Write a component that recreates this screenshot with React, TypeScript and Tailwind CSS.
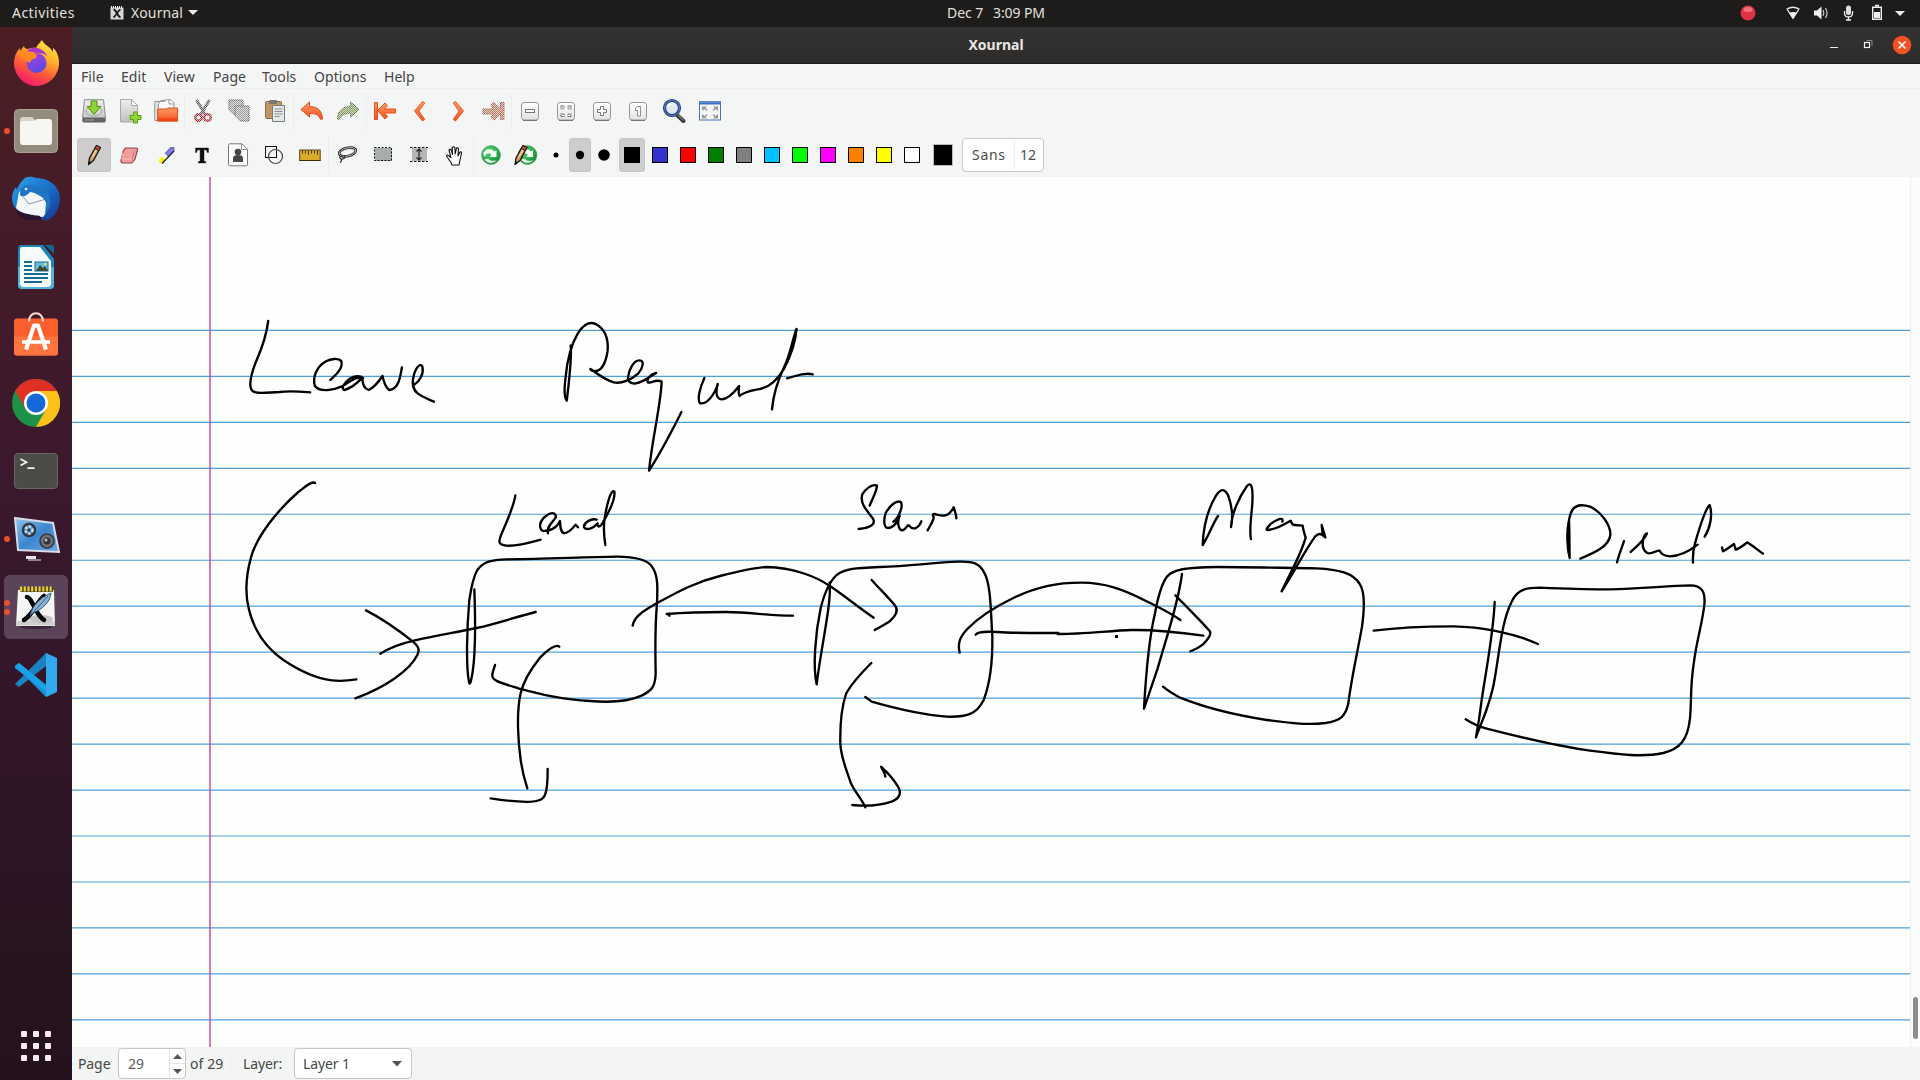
import React from "react";

type Kids = { children?: React.ReactNode };

/* ---------- shared primitives ---------- */

const Cell = ({ children, w = "w-9" }: Kids & { w?: string }) => (
  <div className={`flex h-11 shrink-0 items-center justify-center ${w}`}>{children}</div>
);

const Icon = ({ children }: Kids) => (
  <svg width="24" height="24" viewBox="0 0 24 24" fill="none" className="overflow-visible">
    {children}
  </svg>
);

const Sep = () => <div className="h-9 w-px shrink-0 bg-[#eceded]" />;

const Defs = () => (
  <svg width="0" height="0" className="absolute">
    <defs>
      <pattern id="checker" width="2" height="2" patternUnits="userSpaceOnUse">
        <rect width="1" height="1" fill="#fff" />
        <rect x="1" y="1" width="1" height="1" fill="#fff" />
        <rect x="1" width="1" height="1" fill="#444" />
        <rect y="1" width="1" height="1" fill="#444" />
      </pattern>
      <mask id="dither" maskUnits="userSpaceOnUse" x="-2" y="-2" width="28" height="28">
        <rect x="-2" y="-2" width="28" height="28" fill="url(#checker)" />
      </mask>
      <linearGradient id="orange" x1="0" y1="0" x2="0" y2="1">
        <stop offset="0" stopColor="#ff9a63" />
        <stop offset="1" stopColor="#f0521f" />
      </linearGradient>
      <linearGradient id="button" x1="0" y1="0" x2="0" y2="1">
        <stop offset="0" stopColor="#ffffff" />
        <stop offset="1" stopColor="#e2e2e2" />
      </linearGradient>
      <linearGradient id="grey" x1="0" y1="0" x2="0" y2="1">
        <stop offset="0" stopColor="#eeeeee" />
        <stop offset="1" stopColor="#c0c1bf" />
      </linearGradient>
      <radialGradient id="green" cx=".35" cy=".3" r=".8">
        <stop offset="0" stopColor="#5fd67c" />
        <stop offset="1" stopColor="#0b8a2c" />
      </radialGradient>
      <linearGradient id="foxBody" x1=".8" y1="0" x2=".3" y2="1">
        <stop offset="0" stopColor="#fff04a" />
        <stop offset=".35" stopColor="#ffb02a" />
        <stop offset=".65" stopColor="#ff5a36" />
        <stop offset="1" stopColor="#f01673" />
      </linearGradient>
      <linearGradient id="foxGlobe" x1="0" y1="0" x2=".5" y2="1">
        <stop offset="0" stopColor="#b03ee0" />
        <stop offset="1" stopColor="#5a4be0" />
      </linearGradient>
      <linearGradient id="bird" x1="0" y1="0" x2="1" y2="1">
        <stop offset="0" stopColor="#2ba4ea" />
        <stop offset=".5" stopColor="#1a6fc8" />
        <stop offset="1" stopColor="#16358f" />
      </linearGradient>
      <linearGradient id="screen" x1="0" y1="0" x2="1" y2="1">
        <stop offset="0" stopColor="#8fc5ec" />
        <stop offset=".5" stopColor="#3c86cf" />
        <stop offset="1" stopColor="#6fa8e4" />
      </linearGradient>
    </defs>
  </svg>
);

/* ---------- toolbar drawings ---------- */

const SaveIcon = () => (
  <Icon>
    <path d="M2.5.7h19L23.4 18v4.2q0 1-1 1H1.6q-1 0-1-1V18z" fill="url(#grey)" stroke="#8c8d8a" />
    <path d="M1 18.5h22v3.7q0 .7-.7.7H1.8q-.8 0-.8-.7z" fill="#62645f" />
    <ellipse cx="12" cy="12" rx="8" ry="5" stroke="#a5a6a3" />
    <path d="M9 2h6v5.5h3.8L12 15.3 5.2 7.5H9z" fill="#8fd336" stroke="#4f8f12" />
    <path d="M3 21h9" stroke="#9fa19c" />
  </Icon>
);
const NewIcon = () => (
  <Icon>
    <g transform="translate(1)">
      <path d="M1.500.5h11l6 6v16.500h-17z" fill="url(#grey)" stroke="#a9aaa8" />
      <path d="M12.500.5v6h6z" fill="#fff" stroke="#a9aaa8" />
      <path d="M14.500 13h4v3.500h3.500v4h-3.500V24h-4v-3.500H11v-4h3.500z" fill="#8ed433" stroke="#5a9c16" />
    </g>
  </Icon>
);
const OpenIcon = () => (
  <Icon>
    <path d="M.7 2.500h6v-1h4v20H.7z" fill="#dfe0de" stroke="#999" />
    <path d="M6.500 2.500H11V.7h6l3 3v10H4.500v-9z" fill="#fafafa" stroke="#9a9a9a" />
    <path d="M15 1v4h4.500" stroke="#9a9a9a" />
    <path d="M3.700 10H13l1-1h9.600v13.200H3.700z" fill="url(#orange)" stroke="#d9531c" />
    <path d="M4 20.500h19.500" stroke="#f0400e" strokeWidth="2" />
  </Icon>
);
const CutIcon = () => (
  <Icon>
    <g mask="url(#dither)">
      <path d="M5.500 1 14 15M18.500 1 10 15" stroke="#555" strokeWidth="3" />
      <circle cx="7.500" cy="18.500" r="3.300" stroke="#9e1f2a" strokeWidth="2.400" />
      <circle cx="16.500" cy="18.500" r="3.300" stroke="#9e1f2a" strokeWidth="2.400" />
    </g>
  </Icon>
);
const CopyIcon = () => (
  <Icon>
    <g mask="url(#dither)">
      <path d="M2 1h14v15H7l-5-5z" fill="#9c9d9c" stroke="#555" />
      <path d="M8 7h14v15H13l-5-5z" fill="#9c9d9c" stroke="#555" />
    </g>
  </Icon>
);
const PasteIcon = () => (
  <Icon>
    <rect x="2.500" y="2.500" width="16" height="17" rx="1" fill="#c09566" stroke="#8f6a43" />
    <rect x="6" y="1" width="8" height="4" rx="1" fill="#777" />
    <path d="M9.500 6.500h12v16h-12z" fill="#e6e7e8" stroke="#777c80" />
    <path d="M11.500 10h8M11.500 12.500h8M11.500 15h8M11.500 17.500h5" stroke="#8c8f92" />
  </Icon>
);
const UndoIcon = () => (
  <Icon>
    <path d="M1 10.500 9.500 3v4.500c7 .2 12.500 3 13 12.500l-2 .3c-2-4.500-5-6-11-5.800V18z" fill="url(#orange)" stroke="#dc4e1a" strokeLinejoin="round" />
  </Icon>
);
const RedoIcon = () => (
  <Icon>
    <g mask="url(#dither)">
      <path d="M23 10.500 14.500 3v4.500c-7 .2-12.500 3-13 12.500l2 .3c2-4.500 5-6 11-5.800V18z" fill="#7f9a5a" stroke="#4a672f" strokeLinejoin="round" />
    </g>
  </Icon>
);
const FirstIcon = () => (
  <Icon>
    <path d="M1.500 3.500h3v17h-3zM4.500 11.500l7.500-7.500 2.500 2.500-3 3.500h11v4h-11l3 3.500-2.500 2.500z" fill="url(#orange)" stroke="#e2521d" strokeLinejoin="round" />
  </Icon>
);
const PrevIcon = () => (
  <Icon>
    <path d="M13.500 2.500 15.800 4 10 12l5.800 8.500-2.300 1.500L5.500 12z" fill="url(#orange)" stroke="#ea5c27" strokeLinejoin="round" />
  </Icon>
);
const NextIcon = () => (
  <Icon>
    <path d="M10.500 2.500 8.200 4 14 12l-5.800 8.500 2.300 1.500 8-10z" fill="url(#orange)" stroke="#ea5c27" strokeLinejoin="round" />
  </Icon>
);
const LastIcon = () => (
  <Icon>
    <g mask="url(#dither)" transform="translate(1)">
      <path d="M1 10h10.500L9 6l3-2.500 6.500 6V3.500H22v17h-3.500v-5.500L12 21l-3-2.500 2.500-3.500H1z" fill="#b9785d" stroke="#995341" />
    </g>
  </Icon>
);
const ZoomButton = ({ children }: Kids) => (
  <Icon>
    <rect x="3.500" y="3.500" width="17" height="17.500" rx="2.500" fill="url(#button)" stroke="#969896" />
    <path d="M5 21.500h14" stroke="#777" />
    <g stroke="#757775" fill="#fff">{children}</g>
  </Icon>
);
const MagnifierIcon = () => (
  <Icon>
    <path d="m15 16 6.500 6" stroke="#333" strokeWidth="4" strokeLinecap="round" />
    <path d="m15 15 6 6" stroke="#777" strokeWidth="1.500" strokeLinecap="round" />
    <circle cx="10" cy="9" r="7.500" fill="#dfe9f5" stroke="#24417f" strokeWidth="3.200" />
    <circle cx="10" cy="9" r="7.500" stroke="#5578bd" strokeWidth="1.200" />
    <path d="M5.500 8.500c.5-3 3-4.500 6-4" stroke="#fff" strokeWidth="1.500" />
  </Icon>
);
const FullscreenIcon = () => (
  <Icon>
    <rect x="1.500" y="2.500" width="21" height="18.500" fill="#f5f6f7" stroke="#4a74b5" />
    <path d="M1 2h22v3.500H1z" fill="#3f6fc0" />
    <path d="M1.500 3h21" stroke="#7da3de" />
    <path d="M4 7.500h5L7.500 9l2 2-1 1-2-2L4 12zM20 7.500h-5L16.500 9l-2 2 1 1 2-2L20 12zM4 19.500h5L7.500 18l2-2-1-1-2 2L4 15zM20 19.500h-5l1.500-1.500-2-2 1-1 2 2 2.500-2z" fill="#999b99" />
  </Icon>
);

const PencilShape = () => (
  <>
    <path d="M6.500 21.500 7.500 15 14.500 2.500l4 2L11.500 17.500z" fill="#d9a066" stroke="#111" strokeWidth="1.300" strokeLinejoin="round" />
    <path d="m10.500 13.500 4.500-8" stroke="#f6d9a8" strokeWidth="1.300" />
    <path d="m14.500 2.500 4 2-1.700 3-4-2z" fill="#c44434" stroke="#222" />
    <path d="m6.500 21.500.6-3.500 2.500 1.200z" fill="#111" />
  </>
);
const EraserIcon = () => (
  <Icon>
    <path d="M7.500 5h10.500q2 0 1.500 2l-2.500 9-3 4H5.500q-3 0-2.500-3L5 9q.7-2.500 2.500-4z" fill="#f29c9c" stroke="#8f4549" strokeWidth="1.200" />
    <path d="M5 9.500 3.500 16h10l3-9.500" stroke="#f9c0be" />
    <path d="m14 16.500 2.500-9.500" stroke="#c06f70" />
  </Icon>
);
const HighlighterIcon = () => (
  <Icon>
    <path d="M16.500 4.500h3.500v3.500l-6 6-3-3.500z" fill="#817bea" stroke="#55529a" strokeWidth=".8" />
    <path d="m11 10.500 3 3.500-2.500 2.500-3.500-3z" fill="#fff" />
    <path d="m8 13.500 3.500 3-4 3.500H5v-3.500z" fill="#f7ef14" />
    <path d="M20 8 8 20.500" stroke="#222" strokeWidth="1.300" />
  </Icon>
);
const TextIcon = () => (
  <Icon>
    <path d="M5.500 5h13v4.500h-1.200c-.3-2-1-2.700-2.500-2.700H14v10.400c0 1 .5 1.300 1.800 1.400V20H8.300v-1.400c1.300-.1 1.800-.4 1.800-1.400V6.800h-.9c-1.500 0-2.200.7-2.500 2.700H5.500z" fill="#111" stroke="#111" strokeWidth=".4" />
  </Icon>
);
const ImageIcon = () => (
  <Icon>
    <path d="M4 .8h12l5.500 5.500v15.500q0 1-1 1H4q-1.500 0-1.500-1.500V2.300Q2.500.8 4 .8z" fill="#fff" stroke="#777" />
    <path d="M15.500 1v5.500h6" stroke="#999" />
    <circle cx="12" cy="9" r="3.300" fill="#444746" />
    <path d="M7 19v-4q0-3 5-3t5 3v4z" fill="#444746" />
  </Icon>
);
const ShapesIcon = () => (
  <Icon>
    <rect x="3.500" y="3.500" width="11" height="11" stroke="#111" />
    <circle cx="13.500" cy="13.500" r="7" stroke="#444" strokeWidth="1.200" />
  </Icon>
);
const RulerIcon = () => (
  <Icon>
    <rect x="1.700" y="7" width="20.500" height="10.500" fill="#d7aa2a" stroke="#5c450c" />
    <path d="M1.500 17.500h21" stroke="#3d2d05" />
    <path d="M4.500 7.500v3M7.500 7.500v3M10.500 7.500v4M13.500 7.500v3M16.500 7.500v3M19.500 7.500v4" stroke="#48350a" />
  </Icon>
);
const LassoIcon = () => (
  <Icon>
    <ellipse cx="12.500" cy="9" rx="8.500" ry="4" transform="rotate(-13 12.500 9)" stroke="#222" strokeWidth="2.600" />
    <ellipse cx="12.500" cy="9" rx="8.500" ry="4" transform="rotate(-13 12.500 9)" stroke="#ddd" strokeWidth=".8" />
    <path d="M8 13c-5 0-3 3-1.500 3.500M9.500 12.500c1.500 4-2.500 3-3 4s.5 2-1.500 3" stroke="#333" strokeWidth="1.300" />
  </Icon>
);
const SelectRectIcon = () => (
  <Icon>
    <rect x="4" y="5" width="17" height="13" fill="#a8acab" />
    <rect x="3.500" y="4.500" width="17" height="13" stroke="#111" strokeDasharray="2 1.500" />
  </Icon>
);
const VerticalSpaceIcon = () => (
  <Icon>
    <rect x="5" y="5" width="15" height="13" fill="#b5b7b6" />
    <path d="M3 4.500h18M3 18.500h18" stroke="#111" strokeDasharray="2.500 1.500" />
    <path d="M12 6v11M9.500 8.500 12 6l2.500 2.500M9.500 14.500 12 17l2.500-2.500" stroke="#222" strokeWidth="1.200" />
  </Icon>
);
const HandIcon = () => (
  <Icon>
    <path d="M8 19.500 3.500 13q1-2 3.500.8l1 .8-2-7.600q1.500-1.500 2.500.5l1 4-.3-7q1.500-1.500 2.600 0l.4 6.500 1.300-6q1.800-.6 2 1L15 13l2-4q1.500-.6 1.500 1L17 17l-1 5H9z" fill="#fff" stroke="#111" strokeWidth="1.100" strokeLinejoin="round" />
  </Icon>
);
const SwirlShape = () => (
  <>
    <circle cx="12" cy="12" r="9.300" fill="url(#green)" stroke="#2c9a47" strokeWidth=".8" />
    <path d="M4 11c1.500-5 8-6.500 11.500-2.500l2-1.500v7h-7l2-2c-2-2.500-5.500-2.500-6.500 2z" fill="#f3fbf4" />
    <path d="M5.500 16.500c3 4.500 9 4.500 12.500.5-3.500 1.500-7 1-9-1.500z" fill="#e0f5e4" />
  </>
);

const Dot = ({ r }: { r: number }) => (
  <svg width="16" height="16" viewBox="0 0 16 16" className="shrink-0">
    <circle cx="8" cy="8" r={r} fill="#000" />
  </svg>
);

const swatches = [
  "bg-[#3333cc]", "bg-[#ff0000]", "bg-[#008000]", "bg-[#808080]", "bg-[#00c0ff]",
  "bg-[#00ff00]", "bg-[#ff00ff]", "bg-[#ff8000]", "bg-[#ffff00]", "bg-white",
];

/* ---------- dock drawings ---------- */

const DockSvg = ({ children }: Kids) => (
  <svg width="48" height="48" viewBox="0 0 48 48" fill="none">{children}</svg>
);

const Firefox = () => (
  <DockSvg>
    <path d="M30 1c-2 3-5 5-6 8-5-1-8 1-8 1-3 0-4-2-4-3-2 2-3 4-3 5-1-1-1-2-1-3-4 4-6 9-6 15 0 12 10 23 22 23s23-10 23-23c0-6-2-12-6-15 0 2 0 3 0 4-3-6-9-7-11-12z" fill="url(#foxBody)" />
    <circle cx="24.500" cy="24" r="10" fill="url(#foxGlobe)" />
    <path d="M9 12c4-2 9 0 12 2 3 1 5 1 3 5-4 1-5 2-6 5-3-1-6-5-10-7z" fill="#ff8a1c" />
    <path d="M15 12c5-6 17-3 20 5-4-3-7-3-10-3z" fill="#a937c8" />
  </DockSvg>
);
const Files = () => (
  <DockSvg>
    <rect x="2.500" y="2.500" width="43" height="43" rx="4" fill="#938b7c" stroke="#aca594" />
    <path d="M8 13q0-3 3-3h8q2 0 3 2l2 2H8z" fill="#d9d4c9" />
    <path d="M8 15q0-1 2-1h10q3 0 5-2h12q3 0 3 3v20q0 3-3 3H11q-3 0-3-3z" fill="#f8f6f1" />
  </DockSvg>
);
const Thunderbird = () => (
  <DockSvg>
    <path d="M10 6c4-6 11-4 14-3 14 0 24 9 24 21 0 11-7 20-15 22l1-3-5 3 1-5-9 1C8 40 0 33 0 24c0-6 2-9 4-12l1 3c1-4 3-7 5-9z" fill="url(#bird)" />
    <path d="m7 17 8-3 19 10v14l-3 4C20 42 9 39 4 33z" fill="#f4f6f9" />
    <path d="m8 18 9 11 17-5" stroke="#8e98a6" />
    <path d="M8 20c0-8 6-12 12-9 12-1 20 6 18 20l-5 9 1-12c-2-6-8-10-16-11-4 5-8 5-10 3z" fill="#2074c4" />
    <path d="M3 34c8 5 18 6 25 7l2 5-10-1C10 45 5 40 3 34z" fill="#2a1430" />
    <circle cx="14" cy="14" r="1.300" fill="#eee" />
  </DockSvg>
);
const Writer = () => (
  <DockSvg>
    <path d="M9 2h22l11 14v26q0 4-4 4H10q-4 0-4-4V6q0-4 3-4z" fill="#1a87b7" />
    <path d="M33 2h7q2 0 2 2v7z" fill="#0c6a92" />
    <path d="M10 4h18l11 14v23q0 3-3 3H11q-3 0-3-3V7q0-3 2-3z" fill="#f7fafb" />
    <path d="M6 24h2v18q0 2 3 2h25q3 0 3-2V24h3v18q0 4-4 4H10q-4 0-4-4z" fill="#51b5d9" />
    <path d="M12 19h8M12 23h8M12 27h8M12 31h24M12 35h24M12 39h18" stroke="#126d93" strokeWidth="2" />
    <rect x="23" y="19" width="13" height="9" fill="#68bde0" stroke="#126d93" />
    <path d="m24 28 4-6 3 3 2-2 3 5z" fill="#3c4a32" />
    <circle cx="33.500" cy="21" r="1.300" fill="#f5dd6e" />
  </DockSvg>
);
const Software = () => (
  <DockSvg>
    <g transform="translate(0 -1.500)">
      <rect x="2" y="9" width="44" height="37" rx="3" fill="#fa5e2d" />
      <path d="M2 27h44v16q0 3-3 3H5q-3 0-3-3z" fill="#ff733f" />
      <path d="M17 12c0-11 14-11 14 0" stroke="#fbdccd" strokeWidth="2" />
      <path d="m14 40 8-24h4l8 24" stroke="#fff" strokeWidth="4" strokeLinejoin="round" />
      <path d="M10 32.500h28" stroke="#fff" strokeWidth="3.500" />
    </g>
  </DockSvg>
);
const Chrome = () => (
  <DockSvg>
    <circle cx="24" cy="24" r="24" fill="#1e9348" />
    <path d="M3.200 12A24 24 0 0 1 44.800 12H24L13.600 30z" fill="#df3026" />
    <path d="M44.800 12A24 24 0 0 1 24 48l10.400-18L24 12z" fill="#fcc018" />
    <circle cx="24" cy="24" r="12" fill="#fff" />
    <circle cx="24" cy="24" r="9.500" fill="#1668d8" />
  </DockSvg>
);
const Terminal = () => (
  <DockSvg>
    <rect x="2.500" y="6.500" width="43" height="35" rx="3.500" fill="#4c4b48" stroke="#676662" />
    <path d="m8.500 12 6 3.200-6 3.200M15.500 21.200h7" stroke="#f3f3f1" strokeWidth="1.700" />
  </DockSvg>
);
const Recorder = () => (
  <DockSvg>
    <path d="m3 3 38 5 6 29-41-2z" fill="url(#screen)" stroke="#d9dce4" strokeWidth="2" />
    <circle cx="17" cy="15" r="6" stroke="#34383e" strokeWidth="2.500" />
    <circle cx="17" cy="15" r="3.500" stroke="#d9e2ea" strokeWidth="2.500" strokeDasharray="2 2" />
    <circle cx="17" cy="15" r="1.500" fill="#333" />
    <circle cx="35" cy="26" r="7" fill="#6d7278" stroke="#34383e" strokeWidth="1.500" />
    <circle cx="35" cy="26" r="3.500" fill="#30343a" />
    <circle cx="34" cy="25" r="1.500" fill="#bcc3cb" />
    <path d="M14 41h10v3H14z" fill="#e4e4e6" />
    <path d="M16 45h13" stroke="#aaa" strokeWidth="1.500" />
  </DockSvg>
);
const XournalApp = () => (
  <DockSvg>
    <ellipse cx="24" cy="44" rx="16" ry="2" fill="#241226" opacity=".6" />
    <path d="M6 7h36l1 36H4z" fill="#f5f5f4" />
    <path d="M4 38h39v4.500H4z" fill="#cfcfcd" />
    <ellipse cx="29" cy="36" rx="12" ry="4" fill="#c4c4c4" />
    <path d="M8 6.500h33" stroke="#4b4013" strokeWidth="5" />
    <path d="M8 6h33" stroke="#e7cf3d" strokeWidth="5" strokeDasharray="2.200 1.500" />
    <path d="M15 14c5 0 8 18 17 23M32 13C25 18 22 31 12 37" stroke="#080808" strokeWidth="4.500" strokeLinecap="round" />
    <path d="M18 32c3-9 8-16 21-22-1 9-8 16-18 20z" fill="#8bb4d4" stroke="#31597b" />
    <path d="M18 33 36 13" stroke="#31597b" />
  </DockSvg>
);
const VsCode = () => (
  <DockSvg>
    <path d="m3 15 4-3 27 22v12z" fill="#168fd8" />
    <path d="m3 33 4 3 27-21V2z" fill="#1b83c4" />
    <path d="M34 2 45 7v34l-11 5V2z" fill="#32a9ee" />
    <path d="m3 15 4-3 27 22v7L3 17z" fill="#1aa0e8" />
  </DockSvg>
);

const dock = [
  { Art: Firefox, dots: 0, on: false }, { Art: Files, dots: 1, on: false },
  { Art: Thunderbird, dots: 0, on: false }, { Art: Writer, dots: 0, on: false },
  { Art: Software, dots: 0, on: false }, { Art: Chrome, dots: 0, on: false },
  { Art: Terminal, dots: 0, on: false }, { Art: Recorder, dots: 1, on: false },
  { Art: XournalApp, dots: 2, on: true }, { Art: VsCode, dots: 0, on: false },
];

const Dock = () => (
  <aside className="flex w-[72px] shrink-0 flex-col justify-between bg-linear-to-b from-[#4c1e23] via-[#3a182e] via-45% to-[#23121d]">
    <div className="pt-0.5">
      {dock.map(({ Art, dots, on }, i) => (
        <div key={i} className="flex h-[68px] items-center px-1">
          <div className={`relative flex h-16 w-16 items-center justify-center rounded-md ${on ? "bg-[#5b435a]" : ""}`}>
            <div className="absolute top-0 left-0 flex h-16 w-1.5 flex-col items-center justify-center gap-[3px]">
              {Array.from({ length: dots }, (_, k) => (
                <i key={k} className="h-1.5 w-1.5 rounded-full bg-[#e9502b]" />
              ))}
            </div>
            <Art />
          </div>
        </div>
      ))}
    </div>
    <div className="mb-[19px] ml-[21px] grid w-[30px] grid-cols-3 gap-1.5">
      {Array.from({ length: 9 }, (_, k) => (
        <i key={k} className="h-1.5 w-1.5 rounded-[1px] bg-[#f8eaf3]" />
      ))}
    </div>
  </aside>
);

/* ---------- handwriting ---------- */

const groups = [
  {
    at: "translate(220 300) scale(.39541 .33333)",
    d: [
      "M122 63C116 120 100 160 90 188C78 225 73 252 79 268C85 285 120 277 150 276C180 272 205 275 228 277",
      "M279 240C292 225 312 205 307 184C300 173 280 176 268 184C245 200 233 230 240 258C252 277 285 272 310 258C335 240 348 228 362 234C355 226 340 226 328 236C312 250 306 266 314 270C330 266 345 252 360 233C360 252 366 266 376 270C390 262 402 244 411 228C414 245 418 262 428 270C450 266 455 240 460 202",
      "M490 255C505 245 516 222 512 200C508 190 498 196 491 222C484 250 487 268 500 280C515 293 530 299 541 305",
      "M887 136C890 180 882 250 877 302C869 290 871 260 874 232C878 180 890 130 905 100C918 75 932 64 948 71C972 84 984 115 980 155C976 185 966 212 950 213C940 215 935 207 937 207C950 217 970 238 996 247C1015 252 1040 240 1058 220C1070 203 1074 182 1061 181C1046 180 1034 210 1032 232C1031 246 1040 252 1052 250C1070 247 1085 232 1103 219C1088 222 1078 238 1082 247C1092 252 1100 235 1117 245C1114 320 1094 410 1085 512C1108 470 1140 400 1167 336",
      "M1225 234C1214 262 1206 298 1214 310C1232 313 1250 285 1259 252C1253 275 1254 295 1268 298C1285 298 1300 278 1313 258C1312 268 1310 280 1314 288C1325 275 1342 272 1360 268C1392 264 1412 235 1427 205C1442 170 1456 125 1458 87C1445 130 1442 165 1427 200C1413 235 1400 275 1396 328",
      "M1457 90C1452 125 1444 160 1434 188",
      "M1434 235C1455 230 1475 215 1499 223",
    ],
  },
  {
    at: "translate(220 470) scale(.33333)",
    d: [
      "M285 39C276 32 255 50 235 66C170 123 110 200 93 262C77 320 75 370 86 415C102 485 140 535 190 570C235 600 285 625 335 631C360 634 385 632 409 628",
      "M438 421C485 445 535 480 578 514C594 527 601 538 592 555C570 600 500 650 406 685",
      "M481 551C510 532 545 520 585 511C645 497 710 487 770 474C835 460 890 440 947 426",
      "M763 358C766 440 768 540 758 605C754 630 750 650 747 636C738 590 740 480 748 390C754 350 760 320 772 300C790 275 815 269 860 268C970 267 1080 262 1190 260C1250 260 1285 270 1298 293C1314 318 1313 350 1311 400C1304 480 1306 550 1307 610C1306 650 1296 661 1265 677C1225 695 1180 699 1110 693C1030 690 960 672 895 655C840 638 815 632 817 615C817 605 822 598 825 585",
      "M886 76C882 105 862 152 846 188C832 220 838 224 858 227C890 230 930 218 962 209",
      "M984 190C977 172 1000 155 1008 141C1007 126 992 126 979 137C956 153 957 175 967 182C985 185 1010 176 1020 153C1021 171 1021 186 1032 190C1048 188 1058 176 1067 164L1074 172",
      "M1130 149C1114 144 1090 158 1092 172C1099 182 1120 176 1133 160C1131 170 1137 174 1146 162C1168 125 1187 88 1183 65C1173 55 1160 105 1154 145C1150 170 1152 200 1156 225",
      "M1018 530C1006 521 980 543 960 563C930 600 910 635 902 670C888 730 895 820 902 870C907 905 914 930 922 955",
      "M812 985C850 991 900 997 935 995C965 992 975 985 979 960C983 940 983 920 983 897",
      "M1238 467C1242 440 1270 423 1310 400C1380 362 1430 335 1500 318C1560 303 1600 293 1640 291C1720 292 1790 321 1830 348C1880 382 1915 412 1961 443",
      "M1348 437C1345 432 1342 433 1340 432C1400 427 1460 426 1520 426C1590 427 1650 437 1719 437",
    ],
  },
  {
    at: "translate(640 470) scale(.33333)",
    d: [
      "M689 107C696 88 710 66 711 47C697 40 674 59 667 73C659 97 677 118 697 143C710 161 694 174 656 177",
      "M760 155C775 145 790 111 783 97C770 88 750 107 737 129C729 153 733 173 743 174C762 173 776 152 779 138C771 155 774 181 788 181C801 176 803 159 808 168C822 184 838 170 844 154",
      "M863 181C872 164 882 150 881 141C875 132 882 130 890 134C909 139 925 142 941 112C945 124 949 135 949 145",
      "M569 337C575 400 545 520 530 643C518 590 526 490 542 415C553 370 565 338 590 315C618 295 645 294 720 291C810 288 880 278 955 275C1000 273 1018 281 1031 305C1053 340 1052 420 1057 500C1058 570 1050 640 1031 690C1010 733 980 742 920 740C840 734 765 715 695 695L676 681",
      "M695 330C720 358 748 385 766 408C778 424 764 440 750 453C735 464 718 472 704 480",
      "M694 579C665 608 635 638 618 672C602 720 600 770 601 820C603 865 620 900 632 938C646 968 664 985 676 1012",
      "M637 1005C690 1011 730 1003 757 994C780 984 785 968 774 950C759 925 742 907 723 890C729 900 735 909 736 920",
      "M959 548C952 520 960 500 982 477C1015 443 1070 408 1120 384C1190 350 1250 338 1325 338C1395 338 1450 359 1508 388C1550 408 1590 427 1621 450",
      "M1007 494C1015 483 1045 485 1070 486C1135 490 1190 489 1255 489L1253 492C1320 493 1410 482 1475 480C1550 479 1620 487 1690 497",
    ],
  },
  {
    at: "translate(1100 470) scale(.33333)",
    d: [
      "M246 312C235 400 200 500 173 595C158 640 144 680 132 716C138 610 148 500 165 430C174 380 183 345 200 321C216 298 260 292 350 291C450 291 560 294 650 295C715 298 760 309 780 343C797 370 793 420 786 470C772 550 755 620 745 700C737 740 720 752 676 759C620 766 560 758 500 750C410 736 320 715 240 683C220 672 203 662 189 650",
      "M226 376C260 410 300 450 329 483C337 493 320 512 309 523C296 534 285 538 271 544",
      "M354 138C337 163 325 200 308 225C310 170 325 115 348 77C362 56 372 54 384 75C395 105 400 140 393 171C395 130 417 82 441 48C457 30 459 65 457 100C453 150 447 185 453 207",
      "M547 155C552 138 528 150 514 160C507 168 495 178 502 180C530 178 552 164 572 152C575 162 578 166 585 165L608 167C609 180 613 190 617 203C603 255 567 315 545 364C580 310 610 250 645 200C655 190 662 188 676 202L665 165 668 194",
      "M821 482C890 473 970 469 1060 469C1140 470 1240 488 1314 522",
    ],
  },
  {
    at: "translate(1440 480) scale(.33333)",
    d: [
      "M387 120C389 165 388 200 389 234C378 190 382 130 392 100C402 72 425 72 450 80C483 95 513 135 511 165C507 200 462 219 421 236",
      "M384 140C382 165 383 195 387 220",
      "M552 183C545 205 536 225 531 247",
      "M572 216C590 200 615 178 621 160C610 160 598 207 622 219C636 224 650 210 659 212C663 222 670 228 690 229C725 229 752 210 773 194",
      "M794 170C810 145 819 105 809 75C797 85 775 155 765 190C760 208 758 230 759 248",
      "M846 202 849 214C862 207 874 198 882 192L887 209C900 205 912 195 922 187C940 199 955 211 969 221",
      "M164 366C160 460 140 560 125 660C119 710 113 745 108 772C120 735 155 670 166 585C180 500 187 420 215 365C233 325 265 323 300 323C370 326 440 329 510 328C600 326 680 318 750 316C785 316 797 335 793 375C787 430 770 480 762 545C750 620 755 660 750 715C743 780 720 807 670 819C610 832 540 824 450 812C350 798 230 769 140 746C118 740 98 732 77 718",
    ],
  },
];

const ruled = Array.from({ length: 16 }, (_, i) => 330.4 + i * 45.965);

const Canvas = () => (
  <svg width="1838" height="870" viewBox="72 177 1838 870" className="block shrink-0" fill="none">
    {ruled.map((y) => (
      <path key={y} d={`M72 ${y}H1910`} stroke="#4c9fdd" strokeWidth="1.200" />
    ))}
    <path d="M210 177V1047" stroke="#c4429a" strokeWidth="1.400" />
    {groups.map((g) => (
      <g key={g.at} transform={g.at} stroke="#000" strokeWidth="2.350" strokeLinecap="round" strokeLinejoin="round">
        {g.d.map((d) => (
          <path key={d} d={d} vectorEffect="non-scaling-stroke" />
        ))}
      </g>
    ))}
    <rect x="1115" y="635" width="3" height="3" fill="#000" />
  </svg>
);

/* ---------- bars ---------- */

const TopBar = () => (
  <header className="grid h-[27px] shrink-0 grid-cols-3 items-center bg-[#1d1c1b] text-[14px] text-[#e2e0dc]">
    <div className="flex items-center pb-px pl-3">
      <span className="w-[98px] tracking-[0.45px]">Activities</span>
      <svg width="14" height="14" viewBox="0 0 14 14" fill="none" className="mr-[7px]">
        <path d="M.5 1.500h13v12H.5z" fill="#d8d8d8" />
        <path d="M1 1h12" stroke="#fff" strokeWidth="2" strokeDasharray="1 1" />
        <path d="M3.500 3.500c3 0 3 6 7 8M10.500 3.500C7 5 7 9 3.500 11.500" stroke="#181818" strokeWidth="1.800" />
      </svg>
      <span className="w-[57px] tracking-[0.1px]">Xournal</span>
      <svg width="10" height="6" viewBox="0 0 10 6"><path d="M0 0h10L5 5z" fill="#ecebe9" /></svg>
    </div>
    <div className="flex justify-center gap-[10px] pb-px pl-[72px] tracking-[-0.1px]">
      <span>Dec 7</span>
      <span>3:09 PM</span>
    </div>
    <svg width="180" height="27" viewBox="1740 0 180 27" fill="none" className="justify-self-end">
      <circle cx="1748" cy="13" r="7.500" fill="#df3343" />
      <ellipse cx="1748" cy="9.500" rx="4.500" ry="2.500" fill="#f4707a" />
      <path d="M1787 9c4-2.300 8-2.300 12 0l-6 9.300z" stroke="#e8e8e8" strokeWidth="1.300" strokeLinejoin="round" />
      <path d="m1789.300 12.800q3.700-1.800 7.400 0l-3.700 5.500z" fill="#f2f2f2" />
      <path d="M1814 10.500h3l4.500-4v13l-4.500-4h-3z" fill="#eee" />
      <path d="M1823 10q1.700 3 0 6M1825.500 8q3 5 0 10" stroke="#ccc" strokeWidth="1.200" />
      <rect x="1846" y="5.500" width="5" height="9.500" rx="2.500" fill="#ddd" />
      <path d="M1844.500 11v2q0 4 4 4t4-4v-2M1848.500 17v3M1846 20h5" stroke="#eee" strokeWidth="1.300" />
      <path d="M1872.700 7.200h8.600v12h-8.600zM1875 5.500h4" stroke="#eee" strokeWidth="1.400" />
      <path d="M1874 12h6v6h-6z" fill="#eee" />
      <path d="M1895 11h10l-5 5z" fill="#eee" />
    </svg>
  </header>
);

const TitleBar = () => (
  <div className="grid h-[37px] shrink-0 grid-cols-3 items-center border-b border-[#1e1d1c] bg-linear-to-b from-[#343230] to-[#2d2c2a]">
    <span />
    <span className="text-center text-[14px] font-bold text-[#e8e6e3]">Xournal</span>
    <svg width="100" height="36" viewBox="1820 27 100 36" fill="none" className="justify-self-end">
      <path d="M1830 47.500h8" stroke="#eee" />
      <rect x="1864.500" y="42.500" width="5" height="5" stroke="#f5f5f5" strokeWidth="1.200" />
      <path d="M1866.500 40.500h5.500V46" stroke="#888" />
      <circle cx="1902" cy="45" r="9.300" fill="#f05223" />
      <path d="m1898.500 41.500 7 7m0-7-7 7" stroke="#fff" strokeWidth="1.600" />
    </svg>
  </div>
);

const menus = [
  ["File", "w-10"], ["Edit", "w-[43px]"], ["View", "w-[49px]"], ["Page", "w-[49px]"],
  ["Tools", "w-[52px]"], ["Options", "w-[70px]"], ["Help", "w-[60px]"],
];

const cornerArrows = "M8 10.500V8h2.500M13.500 8H16v2.500M8 14v2.500h2.500M13.500 16.500H16V14";

const Toolbars = () => (
  <>
    <nav className="flex h-[25px] shrink-0 items-center border-b border-[#eef0f0] pt-0.5 pl-[9px] text-[14px] tracking-[0.05px] text-[#444443]">
      {menus.map(([m, w]) => (
        <span key={m} className={w}>{m}</span>
      ))}
    </nav>
    <div className="flex h-11 shrink-0 items-center pl-1">
      <Cell><SaveIcon /></Cell>
      <Cell><NewIcon /></Cell>
      <Cell><OpenIcon /></Cell>
      <Sep />
      <Cell><CutIcon /></Cell>
      <Cell><CopyIcon /></Cell>
      <Cell><PasteIcon /></Cell>
      <Sep />
      <Cell><UndoIcon /></Cell>
      <Cell><RedoIcon /></Cell>
      <Sep />
      <Cell><FirstIcon /></Cell>
      <Cell><PrevIcon /></Cell>
      <Cell><NextIcon /></Cell>
      <Cell><LastIcon /></Cell>
      <Sep />
      <Cell><ZoomButton><rect x="7.500" y="10.500" width="9" height="3" /></ZoomButton></Cell>
      <Cell>
        <ZoomButton>
          <path d={cornerArrows} fill="none" stroke="#777" strokeWidth="2.800" />
          <path d={cornerArrows} fill="none" stroke="#fff" strokeWidth="1" />
        </ZoomButton>
      </Cell>
      <Cell><ZoomButton><path d="M10.500 7.500h3v3h3v3h-3v3h-3v-3h-3v-3h3z" /></ZoomButton></Cell>
      <Cell><ZoomButton><path d="M11.500 7.500h3v9.500h-3v-5.500h-2V9z" strokeWidth=".8" /></ZoomButton></Cell>
      <Cell><MagnifierIcon /></Cell>
      <Cell><FullscreenIcon /></Cell>
    </div>
    <div className="flex h-11 shrink-0 items-center pl-1">
      <Cell>
        <div className="flex h-[34px] w-[34px] items-center justify-center rounded-[3px] border border-[#c6c6c6] bg-[#cecdcd]">
          <Icon><PencilShape /></Icon>
        </div>
      </Cell>
      <Cell><EraserIcon /></Cell>
      <Cell><HighlighterIcon /></Cell>
      <Cell><TextIcon /></Cell>
      <Cell><ImageIcon /></Cell>
      <Cell><ShapesIcon /></Cell>
      <Cell><RulerIcon /></Cell>
      <Sep />
      <Cell><LassoIcon /></Cell>
      <Cell><SelectRectIcon /></Cell>
      <Cell><VerticalSpaceIcon /></Cell>
      <Cell><HandIcon /></Cell>
      <Sep />
      <Cell w="w-[34px]"><Icon><SwirlShape /></Icon></Cell>
      <Cell>
        <Icon>
          <g transform="translate(1.500)"><SwirlShape /></g>
          <g transform="translate(-5.500)"><PencilShape /></g>
        </Icon>
      </Cell>
      <Cell w="w-6"><Dot r={2.5} /></Cell>
      <Cell w="w-6">
        <div className="flex h-[34px] w-[22px] items-center justify-center rounded-[3px] border border-[#c6c6c6] bg-[#cecdcd]"><Dot r={4.2} /></div>
      </Cell>
      <Cell w="w-6"><Dot r={5.8} /></Cell>
      <div className="w-px shrink-0" />
      <Sep />
      <Cell w="w-7">
        <div className="flex h-[34px] w-[26px] items-center justify-center rounded-[3px] border border-[#c6c6c6] bg-[#cecdcd]">
          <i className="h-4 w-4 bg-black" />
        </div>
      </Cell>
      {swatches.map((c) => (
        <Cell key={c} w="w-7"><i className={`h-4 w-4 border border-black ${c}`} /></Cell>
      ))}
      <i className="ml-[7px] h-[22px] w-5 border border-[#bbb] bg-black" />
      <div className="ml-[9px] flex h-[34px] w-[82px] items-center rounded-[4px] border border-[#c5c6c5] bg-white text-[14px] text-[#4c4c4b]">
        <span className="flex h-7 w-[52px] items-center border-r border-[#ececec] pl-[9px] tracking-[0.7px]">Sans</span>
        <span className="pl-[5px]">12</span>
      </div>
    </div>
  </>
);

const StatusBar = () => (
  <footer className="flex h-[33px] shrink-0 items-center bg-[#f3f4f4] text-[14px] text-[#484847]">
    <span className="w-[46px] pl-1.5 tracking-[-0.1px]">Page</span>
    <div className="flex h-[31px] w-[68px] items-center rounded-[4px] border border-[#c5c6c5] bg-white">
      <span className="w-[50px] pl-[9px] text-[#5a5a59]">29</span>
      <div className="flex h-full flex-1 flex-col items-center border-l border-[#e6e6e6]">
        <div className="flex w-full flex-1 items-center justify-center border-b border-[#e6e6e6]">
          <svg width="9" height="5" viewBox="0 0 9 5"><path d="M0 5 4.500 0 9 5z" fill="#555" /></svg>
        </div>
        <div className="flex w-full flex-1 items-center justify-center">
          <svg width="9" height="5" viewBox="0 0 9 5"><path d="M0 0h9L4.500 5z" fill="#555" /></svg>
        </div>
      </div>
    </div>
    <span className="w-11 pl-1 tracking-[0.1px]">of 29</span>
    <span className="w-16 border-l border-[#ecedec] pl-3 tracking-[-0.1px]">Layer:</span>
    <div className="flex h-[31px] w-[118px] items-center justify-between rounded-[4px] border border-[#c5c6c5] bg-white pr-[9px] pl-2">
      <span className="tracking-[-0.1px]">Layer 1</span>
      <svg width="10" height="6" viewBox="0 0 10 6"><path d="M0 0h10L5 5.500z" fill="#555" /></svg>
    </div>
  </footer>
);

export default function App() {
  return (
    <div className="flex h-[1080px] w-[1920px] flex-col overflow-hidden bg-[#f4f5f5] font-['Noto_Sans','Open_Sans',sans-serif] leading-none">
      <Defs />
      <TopBar />
      <div className="flex min-h-0 flex-1">
        <Dock />
        <div className="flex min-w-0 flex-1 flex-col">
          <TitleBar />
          <Toolbars />
          <main className="flex h-[870px] min-h-0 flex-1 bg-[#fefefd]">
            <Canvas />
            <div className="flex w-2.5 flex-col items-center justify-end border-l border-[#f0f0f0] bg-[#fcfcfc] pb-2">
              <i className="h-[42px] w-[5px] rounded-full bg-[#8c8d8c]" />
            </div>
          </main>
          <StatusBar />
        </div>
      </div>
    </div>
  );
}
